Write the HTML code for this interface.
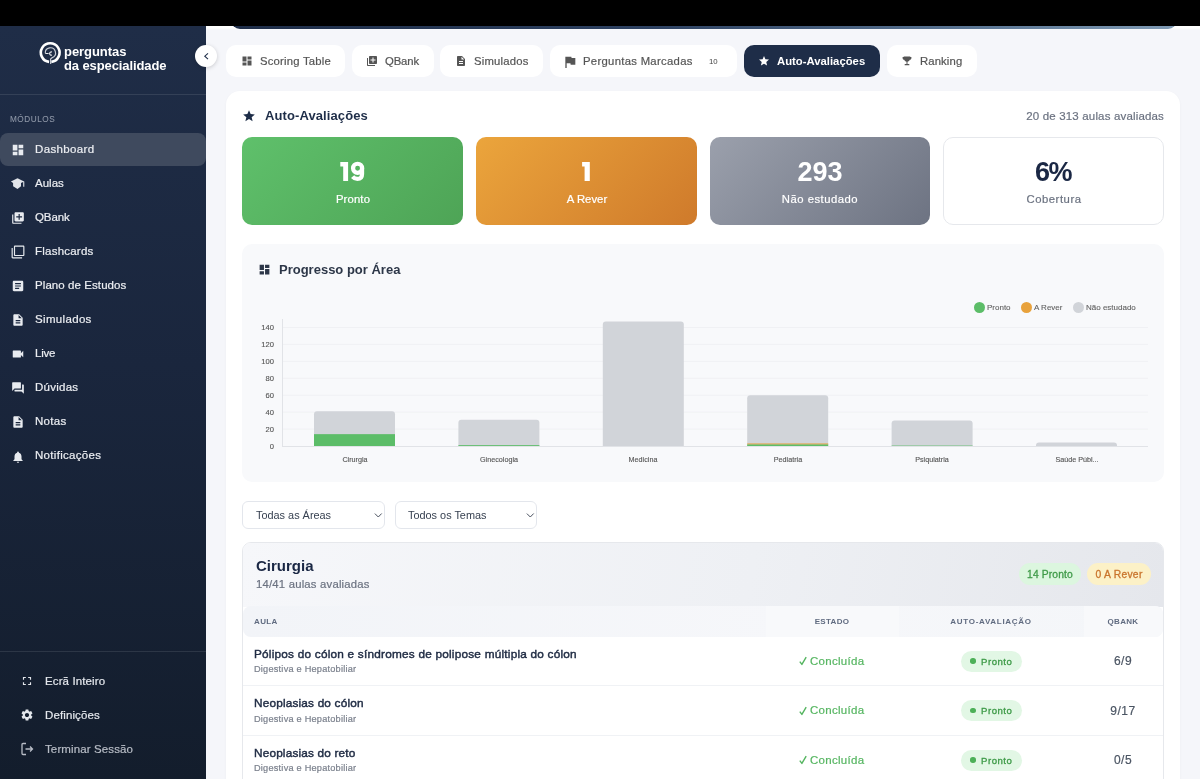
<!DOCTYPE html>
<html><head><meta charset="utf-8">
<style>
*{box-sizing:border-box;margin:0;padding:0}
html,body{width:1200px;height:779px;overflow:hidden;background:#f5f6fa;font-family:"Liberation Sans",sans-serif}
.abs{position:absolute}
.t{position:absolute;white-space:nowrap;line-height:1;will-change:transform}
</style></head><body>
<div class="abs" style="left:206px;top:26px;width:994px;height:4px;background:linear-gradient(180deg,#fff 0%,#fff 45%,#f5f6fa 100%)"></div><div class="abs" style="left:231px;top:0px;width:946px;height:29px;border-radius:0 0 9px 9px;background:linear-gradient(90deg,#1e2d48 0%,#2e4262 45%,#5d7896 80%,#7f9ab4 100%)"></div><div class="abs" style="left:0;top:0;width:1200px;height:26px;background:#000"></div><div class="abs" style="left:0;top:26px;width:206px;height:753px;background:linear-gradient(180deg,#1f2d47 0%,#1a263d 45%,#131d2c 100%)"></div><svg class="abs" style="left:38px;top:40px" width="25" height="25" viewBox="0 0 25 25"><path d="M11.1 21.9 A9.35 9.35 0 1 1 13.3 21.9" fill="none" stroke="#fff" stroke-width="2.6"/><path d="M7.3 13.1 A5.1 5.1 0 1 1 14.3 17.6 L12.6 19 V24" fill="none" stroke="#c9cdd5" stroke-width="1.15"/><path d="M7.3 13.5 L10.6 13.5 M13.9 12.1 A1.6 1.6 0 1 0 13.9 15" fill="none" stroke="#e6e8ec" stroke-width="1.2"/></svg><div class="t" style="left:64.4px;top:44.90px;font-size:13px;color:#fff;font-weight:700;letter-spacing:-0.05px;">perguntas</div><div class="t" style="left:64.4px;top:58.70px;font-size:13px;color:#fff;font-weight:700;letter-spacing:-0.1px;">da especialidade</div><div class="abs" style="left:0;top:94px;width:206px;height:1px;background:rgba(255,255,255,0.10)"></div><div class="t" style="left:10px;top:115.96px;font-size:8.2px;color:#8d96a6;font-weight:400;letter-spacing:0.55px;-webkit-text-stroke:0.1px #8d96a6;">MÓDULOS</div><div class="abs" style="left:0;top:133px;width:206px;height:33px;background:#3f4a5e;border-radius:8px"></div><svg class="abs" style="left:10.5px;top:142.8px" width="14" height="14" viewBox="0 0 24 24"><path fill="#e8ebf0" d="M3 13h8V3H3v10zm0 8h8v-6H3v6zm10 0h8V11h-8v10zm0-18v6h8V3h-8z"/></svg><div class="t" style="left:35.25px;top:143.77px;font-size:11.5px;color:#eceef2;font-weight:400;letter-spacing:0.36px;-webkit-text-stroke:0.2px #eceef2;">Dashboard</div><svg class="abs" style="left:8px;top:174.1px" width="20" height="18" viewBox="8 174 20 18"><path fill="#e2e5ea" d="M17.5 178.2 L24.1 181.5 L21 183.1 V186.3 L17.5 189 L13.1 186.3 V183.1 L10.9 181.5 Z M23.2 181.6 h1.1 v5.2 h-1.1 z"/></svg><div class="t" style="left:35.25px;top:177.85px;font-size:11.5px;color:#eceef2;font-weight:400;letter-spacing:0.026px;-webkit-text-stroke:0.2px #eceef2;">Aulas</div><svg class="abs" style="left:10.5px;top:211.0px" width="14" height="14" viewBox="0 0 24 24"><path fill="#e8ebf0" d="M4 6H2v14c0 1.1.9 2 2 2h14v-2H4V6zm16-4H8c-1.1 0-2 .9-2 2v12c0 1.1.9 2 2 2h12c1.1 0 2-.9 2-2V4c0-1.1-.9-2-2-2zm-1 9h-4v4h-2v-4H9V9h4V5h2v4h4v2z"/></svg><div class="t" style="left:35.25px;top:211.93px;font-size:11.5px;color:#eceef2;font-weight:400;letter-spacing:-0.092px;-webkit-text-stroke:0.2px #eceef2;">QBank</div><svg class="abs" style="left:10.5px;top:245.0px" width="14" height="14" viewBox="0 0 24 24"><path fill="#e8ebf0" d="M3 5H1v16c0 1.1.9 2 2 2h16v-2H3V5zm18-4H7c-1.1 0-2 .9-2 2v14c0 1.1.9 2 2 2h14c1.1 0 2-.9 2-2V3c0-1.1-.9-2-2-2zm0 16H7V3h14v14z"/></svg><div class="t" style="left:35.25px;top:246.01px;font-size:11.5px;color:#eceef2;font-weight:400;letter-spacing:0.226px;-webkit-text-stroke:0.2px #eceef2;">Flashcards</div><svg class="abs" style="left:10.5px;top:279.1px" width="14" height="14" viewBox="0 0 24 24"><path fill="#e8ebf0" d="M19 3H5c-1.1 0-2 .9-2 2v14c0 1.1.9 2 2 2h14c1.1 0 2-.9 2-2V5c0-1.1-.9-2-2-2zm-5 14H7v-2h7v2zm3-4H7v-2h10v2zm0-4H7V7h10v2z"/></svg><div class="t" style="left:35.25px;top:280.09px;font-size:11.5px;color:#eceef2;font-weight:400;letter-spacing:0.078px;-webkit-text-stroke:0.2px #eceef2;">Plano de Estudos</div><svg class="abs" style="left:10.5px;top:313.2px" width="14" height="14" viewBox="0 0 24 24"><path fill="#e8ebf0" d="M14 2H6c-1.1 0-1.99.9-1.99 2L4 20c0 1.1.89 2 1.99 2H18c1.1 0 2-.9 2-2V8l-6-6zm2 16H8v-2h8v2zm0-4H8v-2h8v2zm-3-5V3.5L18.5 9H13z"/></svg><div class="t" style="left:35.25px;top:314.17px;font-size:11.5px;color:#eceef2;font-weight:400;letter-spacing:0.334px;-webkit-text-stroke:0.2px #eceef2;">Simulados</div><svg class="abs" style="left:10.5px;top:347.3px" width="14" height="14" viewBox="0 0 24 24"><path fill="#e8ebf0" d="M17 10.5V7c0-.55-.45-1-1-1H4c-.55 0-1 .45-1 1v10c0 .55.45 1 1 1h12c.55 0 1-.45 1-1v-3.5l4 4v-11l-4 4z"/></svg><div class="t" style="left:35.25px;top:348.25px;font-size:11.5px;color:#eceef2;font-weight:400;letter-spacing:-0.249px;-webkit-text-stroke:0.2px #eceef2;">Live</div><svg class="abs" style="left:10.5px;top:381.4px" width="14" height="14" viewBox="0 0 24 24"><path fill="#e8ebf0" d="M21 6h-2v9H6v2c0 .55.45 1 1 1h11l4 4V7c0-.55-.45-1-1-1zm-4 6V3c0-.55-.45-1-1-1H3c-.55 0-1 .45-1 1v14l4-4h10c.55 0 1-.45 1-1z"/></svg><div class="t" style="left:35.25px;top:382.33px;font-size:11.5px;color:#eceef2;font-weight:400;letter-spacing:0.25px;-webkit-text-stroke:0.2px #eceef2;">Dúvidas</div><svg class="abs" style="left:10.5px;top:415.4px" width="14" height="14" viewBox="0 0 24 24"><path fill="#e8ebf0" d="M14 2H6c-1.1 0-1.99.9-1.99 2L4 20c0 1.1.89 2 1.99 2H18c1.1 0 2-.9 2-2V8l-6-6zm2 16H8v-2h8v2zm0-4H8v-2h8v2zm-3-5V3.5L18.5 9H13z"/></svg><div class="t" style="left:35.25px;top:416.41px;font-size:11.5px;color:#eceef2;font-weight:400;letter-spacing:0.312px;-webkit-text-stroke:0.2px #eceef2;">Notas</div><svg class="abs" style="left:10.5px;top:449.5px" width="14" height="14" viewBox="0 0 24 24"><path fill="#e8ebf0" d="M12 22c1.1 0 2-.9 2-2h-4c0 1.1.89 2 2 2zm6-6v-5c0-3.07-1.64-5.64-4.5-6.32V4c0-.83-.67-1.5-1.5-1.5s-1.5.67-1.5 1.5v.68C7.63 5.36 6 7.92 6 11v5l-2 2v1h16v-1l-2-2z"/></svg><div class="t" style="left:35.25px;top:450.49px;font-size:11.5px;color:#eceef2;font-weight:400;letter-spacing:0.297px;-webkit-text-stroke:0.2px #eceef2;">Notificações</div><div class="abs" style="left:0;top:651px;width:206px;height:1px;background:rgba(255,255,255,0.10)"></div><svg class="abs" style="left:20px;top:674px" width="14" height="14" viewBox="0 0 24 24"><path fill="#e4e7ec" d="M7 14H5v5h5v-2H7v-3zm-2-4h2V7h3V5H5v5zm12 7h-3v2h5v-5h-2v3zM14 5v2h3v3h2V5h-5z"/></svg><div class="t" style="left:44.7px;top:675.57px;font-size:11.5px;color:#e4e7ec;font-weight:400;letter-spacing:0.12px;-webkit-text-stroke:0.2px #e4e7ec;">Ecrã Inteiro</div><svg class="abs" style="left:20px;top:708px" width="14" height="14" viewBox="0 0 24 24"><path fill="#e4e7ec" d="M19.14 12.94c.04-.3.06-.61.06-.94 0-.32-.02-.64-.07-.94l2.03-1.58c.18-.14.23-.41.12-.61l-1.92-3.32c-.12-.22-.37-.29-.59-.22l-2.39.96c-.5-.38-1.030-.7-1.62-.94l-.36-2.54c-.04-.24-.24-.41-.48-.41h-3.84c-.24 0-.43.17-.47.41l-.36 2.54c-.59.24-1.13.57-1.62.94l-2.39-.96c-.22-.08-.47 0-.59.22L2.74 8.870c-.12.21-.08.47.12.61l2.03 1.58c-.05.3-.09.63-.09.94s.02.64.07.94l-2.03 1.58c-.18.14-.23.41-.12.61l1.92 3.32c.12.22.37.29.59.22l2.39-.96c.5.38 1.03.7 1.62.94l.36 2.54c.05.24.24.41.48.41h3.84c.24 0 .44-.17.47-.41l.36-2.54c.59-.24 1.13-.56 1.62-.94l2.39.96c.22.08.47 0 .59-.22l1.92-3.32c.12-.22.07-.47-.12-.61l-2.010-1.58zM12 15.6c-1.98 0-3.6-1.62-3.6-3.6s1.62-3.6 3.6-3.6 3.6 1.62 3.6 3.6-1.62 3.6-3.6 3.6z"/></svg><div class="t" style="left:44.7px;top:709.57px;font-size:11.5px;color:#e4e7ec;font-weight:400;letter-spacing:0.12px;-webkit-text-stroke:0.2px #e4e7ec;">Definições</div><svg class="abs" style="left:20px;top:742px" width="14" height="14" viewBox="0 0 14 14"><path d="M6 1.5H3a1 1 0 0 0-1 1v9a1 1 0 0 0 1 1h3" fill="none" stroke="#b8bdc6" stroke-width="1.3"/><path d="M5.5 7h7M10 4.5 12.5 7 10 9.5" fill="none" stroke="#b8bdc6" stroke-width="1.3"/></svg><div class="t" style="left:44.7px;top:743.57px;font-size:11.5px;color:#b8bdc6;font-weight:400;letter-spacing:0.12px;-webkit-text-stroke:0.2px #b8bdc6;">Terminar Sessão</div><div class="abs" style="left:195px;top:45px;width:22px;height:22px;border-radius:50%;background:#fff;box-shadow:0 1px 4px rgba(0,0,0,0.18)"></div><svg class="abs" style="left:201px;top:51px" width="10" height="10" viewBox="0 0 10 10"><path d="M7 2.3 3.8 5.2 7 8.1" fill="none" stroke="#1e2d48" stroke-width="1.1"/></svg><div class="abs" style="left:226px;top:45px;width:119px;height:32px;background:#fff;border-radius:10px"></div><svg class="abs" style="left:240.60000000000002px;top:55px" width="12" height="12" viewBox="0 0 24 24"><path fill="#555" d="M3 13h8V3H3v10zm0 8h8v-6H3v6zm10 0h8V11h-8v10zm0-18v6h8V3h-8z"/></svg><div class="t" style="left:259.6px;top:55.73px;font-size:11.3px;color:#555;font-weight:400;letter-spacing:0.21px;-webkit-text-stroke:0.2px #555;">Scoring Table</div><div class="abs" style="left:352px;top:45px;width:82px;height:32px;background:#fff;border-radius:10px"></div><svg class="abs" style="left:366px;top:55px" width="12" height="12" viewBox="0 0 24 24"><path fill="#555" d="M4 6H2v14c0 1.1.9 2 2 2h14v-2H4V6zm16-4H8c-1.1 0-2 .9-2 2v12c0 1.1.9 2 2 2h12c1.1 0 2-.9 2-2V4c0-1.1-.9-2-2-2zm-1 9h-4v4h-2v-4H9V9h4V5h2v4h4v2z"/></svg><div class="t" style="left:385px;top:55.73px;font-size:11.3px;color:#555;font-weight:400;letter-spacing:-0.109px;-webkit-text-stroke:0.2px #555;">QBank</div><div class="abs" style="left:440px;top:45px;width:103px;height:32px;background:#fff;border-radius:10px"></div><svg class="abs" style="left:455px;top:55px" width="12" height="12" viewBox="0 0 24 24"><path fill="#555" d="M14 2H6c-1.1 0-1.99.9-1.99 2L4 20c0 1.1.89 2 1.99 2H18c1.1 0 2-.9 2-2V8l-6-6zm2 16H8v-2h8v2zm0-4H8v-2h8v2zm-3-5V3.5L18.5 9H13z"/></svg><div class="t" style="left:474px;top:55.73px;font-size:11.3px;color:#555;font-weight:400;letter-spacing:0.216px;-webkit-text-stroke:0.2px #555;">Simulados</div><div class="abs" style="left:550px;top:45px;width:187px;height:32px;background:#fff;border-radius:10px"></div><svg class="abs" style="left:561.7px;top:53.8px" width="16" height="16" viewBox="0 0 24 24"><path fill="#555" d="M14.4 6L14 4H5v17h2v-7h5.6l.4 2h7V6z"/></svg><div class="t" style="left:583px;top:55.73px;font-size:11.3px;color:#555;font-weight:400;letter-spacing:0.302px;-webkit-text-stroke:0.2px #555;">Perguntas Marcadas</div><div class="abs" style="left:744px;top:45px;width:136px;height:32px;background:#1e2d48;border-radius:10px"></div><svg class="abs" style="left:758.2px;top:55px" width="12" height="12" viewBox="0 0 24 24"><path fill="#fff" d="M12 17.27L18.18 21l-1.64-7.03L22 9.24l-7.19-.61L12 2 9.19 8.63 2 9.24l5.46 4.73L5.82 21z"/></svg><div class="t" style="left:777.2px;top:55.73px;font-size:11.3px;color:#fff;font-weight:700;letter-spacing:0.005px;">Auto-Avaliações</div><div class="abs" style="left:887px;top:45px;width:90px;height:32px;background:#fff;border-radius:10px"></div><svg class="abs" style="left:900.6px;top:55px" width="12" height="12" viewBox="0 0 24 24"><path fill="#555" d="M5.5 3h13v1.2h2.3v1.6c0 2-1.4 3.5-3.2 3.8-.8 2.1-2.6 3.6-4.6 3.9V18h3.6v2.4H7.4V18H11v-4.5c-2-.3-3.8-1.8-4.6-3.9C4.6 9.3 3.2 7.8 3.2 5.8V4.2h2.3z"/></svg><div class="t" style="left:919.6px;top:55.73px;font-size:11.3px;color:#555;font-weight:400;letter-spacing:0.12px;-webkit-text-stroke:0.2px #555;">Ranking</div><div class="t" style="left:708.6px;top:58.00px;font-size:7.8px;color:#444;font-weight:400;letter-spacing:0px;">10</div><div class="abs" style="left:226px;top:91px;width:954px;height:720px;background:#fff;border-radius:14px;box-shadow:0 1px 3px rgba(20,30,60,0.04)"></div><svg class="abs" style="left:242px;top:109px" width="14" height="14" viewBox="0 0 24 24"><path fill="#1e2d48" d="M12 17.27L18.18 21l-1.64-7.03L22 9.24l-7.19-.61L12 2 9.19 8.63 2 9.24l5.46 4.73L5.82 21z"/></svg><div class="t" style="left:265px;top:109.30px;font-size:13px;color:#1e2d48;font-weight:700;letter-spacing:0.1px;">Auto-Avaliações</div><div class="t" style="left:564.16px;width:600px;text-align:right;top:110.57px;font-size:11.5px;color:#6b7280;font-weight:400;letter-spacing:0.163px;-webkit-text-stroke:0.2px #6b7280;">20 de 313 aulas avaliadas</div><div class="abs" style="left:242px;top:137px;width:221px;height:88px;background:linear-gradient(135deg,#5fc06b 0%,#4ea456 100%);border-radius:10px;"></div><svg class="abs" style="left:0;top:0" width="1200" height="779"><path fill="#fff" d="M340.3 162 H348.1 V180.9 H343.2 V166.5 H340.3 Z"/><circle cx="357.6" cy="168.3" r="4.55" fill="none" stroke="#fff" stroke-width="4.2"/><path d="M362.05 168.3 V174 Q362.05 178.95 357.4 178.95 Q354.6 178.95 352.6 176.6" fill="none" stroke="#fff" stroke-width="4.2"/></svg><div class="t" style="left:52.58px;width:600px;text-align:center;top:193.73px;font-size:11.3px;color:#fff;font-weight:400;letter-spacing:0.151px;-webkit-text-stroke:0.2px #fff;">Pronto</div><div class="abs" style="left:476px;top:137px;width:221px;height:88px;background:linear-gradient(135deg,#eba53c 0%,#cf7a2b 100%);border-radius:10px;"></div><svg class="abs" style="left:0;top:0" width="1200" height="779"><path fill="#fff" d="M582.1 162 H589.8 V180.9 H584.6 V166.5 H582.1 Z"/></svg><div class="t" style="left:286.51px;width:600px;text-align:center;top:193.73px;font-size:11.3px;color:#fff;font-weight:400;letter-spacing:0.029px;-webkit-text-stroke:0.2px #fff;">A Rever</div><div class="abs" style="left:710px;top:137px;width:220px;height:88px;background:linear-gradient(135deg,#9ba0ac 0%,#6d7382 100%);border-radius:10px;"></div><div class="t" style="left:520.00px;width:600px;text-align:center;top:159.24px;font-size:27px;color:#fff;font-weight:700;letter-spacing:0px;">293</div><div class="t" style="left:520.25px;width:600px;text-align:center;top:193.73px;font-size:11.3px;color:#fff;font-weight:400;letter-spacing:0.494px;-webkit-text-stroke:0.2px #fff;">Não estudado</div><div class="abs" style="left:943px;top:137px;width:221px;height:88px;background:#fff;border-radius:10px;border:1px solid #e6e8ec;"></div><div class="t" style="left:752.75px;width:600px;text-align:center;top:159.24px;font-size:27px;color:#1a2744;font-weight:700;letter-spacing:-1.5px;">6%</div><div class="t" style="left:753.76px;width:600px;text-align:center;top:193.73px;font-size:11.3px;color:#6b7280;font-weight:400;letter-spacing:0.528px;-webkit-text-stroke:0.2px #6b7280;">Cobertura</div><div class="abs" style="left:242px;top:244px;width:922px;height:238px;background:#f8f9fb;border-radius:10px"></div><svg class="abs" style="left:258px;top:263px" width="13" height="13" viewBox="0 0 24 24"><path fill="#2d3748" d="M3 13h8V3H3v10zm0 8h8v-6H3v6zm10 0h8V11h-8v10zm0-18v6h8V3h-8z"/></svg><div class="t" style="left:279px;top:263.10px;font-size:13px;color:#2d3748;font-weight:700;letter-spacing:0px;">Progresso por Área</div><div class="abs" style="left:973.5px;top:301.5px;width:11px;height:11px;border-radius:50%;background:#5cbd68"></div><div class="t" style="left:987.2px;top:304.13px;font-size:8px;color:#606060;font-weight:400;letter-spacing:0px;-webkit-text-stroke:0.1px #606060;">Pronto</div><div class="abs" style="left:1021.2px;top:301.5px;width:11px;height:11px;border-radius:50%;background:#e8a23c"></div><div class="t" style="left:1034.4px;top:304.13px;font-size:8px;color:#606060;font-weight:400;letter-spacing:0px;-webkit-text-stroke:0.1px #606060;">A Rever</div><div class="abs" style="left:1072.8px;top:301.5px;width:11px;height:11px;border-radius:50%;background:#d1d4d9"></div><div class="t" style="left:1086.3px;top:304.13px;font-size:8px;color:#606060;font-weight:400;letter-spacing:0px;-webkit-text-stroke:0.1px #606060;">Não estudado</div><svg class="abs" style="left:0;top:0" width="1200" height="779"><line x1="282" y1="429.1" x2="1148" y2="429.1" stroke="#f0f1f4" stroke-width="1"/><line x1="282" y1="412.1" x2="1148" y2="412.1" stroke="#f0f1f4" stroke-width="1"/><line x1="282" y1="395.2" x2="1148" y2="395.2" stroke="#f0f1f4" stroke-width="1"/><line x1="282" y1="378.3" x2="1148" y2="378.3" stroke="#f0f1f4" stroke-width="1"/><line x1="282" y1="361.4" x2="1148" y2="361.4" stroke="#f0f1f4" stroke-width="1"/><line x1="282" y1="344.4" x2="1148" y2="344.4" stroke="#f0f1f4" stroke-width="1"/><line x1="282" y1="327.5" x2="1148" y2="327.5" stroke="#f0f1f4" stroke-width="1"/><line x1="282.5" y1="319" x2="282.5" y2="446" stroke="#e1e3e7" stroke-width="1"/><line x1="282" y1="446.5" x2="1148" y2="446.5" stroke="#e1e3e7" stroke-width="1"/><path d="M314.0 446 V414.3 Q314.0 411.3 317.0 411.3 H392.0 Q395.0 411.3 395.0 414.3 V446 Z" fill="#d1d4d9"/><rect x="314.0" y="434.15" width="81" height="11.85" fill="#5cbd68"/><path d="M458.4 446 V422.8 Q458.4 419.8 461.4 419.8 H536.4 Q539.4 419.8 539.4 422.8 V446 Z" fill="#d1d4d9"/><rect x="458.4" y="445.15" width="81" height="0.85" fill="#5cbd68"/><path d="M602.8 446 V324.6 Q602.8 321.6 605.8 321.6 H680.8 Q683.8 321.6 683.8 324.6 V446 Z" fill="#d1d4d9"/><path d="M747.2 446 V398.2 Q747.2 395.2 750.2 395.2 H825.2 Q828.2 395.2 828.2 398.2 V446 Z" fill="#d1d4d9"/><rect x="747.2" y="444.31" width="81" height="1.69" fill="#5cbd68"/><rect x="747.2" y="443.46" width="81" height="0.85" fill="#e8a23c"/><path d="M891.6 446 V423.6 Q891.6 420.6 894.6 420.6 H969.6 Q972.6 420.6 972.6 423.6 V446 Z" fill="#d1d4d9"/><rect x="891.6" y="445.58" width="81" height="0.42" fill="#5cbd68"/><path d="M1036.0 446 V445.6 Q1036.0 442.6 1039.0 442.6 H1114.0 Q1117.0 442.6 1117.0 445.6 V446 Z" fill="#d1d4d9"/></svg><div class="t" style="left:-326.40px;width:600px;text-align:right;top:442.57px;font-size:7.6px;color:#555;font-weight:400;letter-spacing:0px;-webkit-text-stroke:0.12px #555;">0</div><div class="t" style="left:-326.40px;width:600px;text-align:right;top:425.64px;font-size:7.6px;color:#555;font-weight:400;letter-spacing:0px;-webkit-text-stroke:0.12px #555;">20</div><div class="t" style="left:-326.40px;width:600px;text-align:right;top:408.71px;font-size:7.6px;color:#555;font-weight:400;letter-spacing:0px;-webkit-text-stroke:0.12px #555;">40</div><div class="t" style="left:-326.40px;width:600px;text-align:right;top:391.78px;font-size:7.6px;color:#555;font-weight:400;letter-spacing:0px;-webkit-text-stroke:0.12px #555;">60</div><div class="t" style="left:-326.40px;width:600px;text-align:right;top:374.85px;font-size:7.6px;color:#555;font-weight:400;letter-spacing:0px;-webkit-text-stroke:0.12px #555;">80</div><div class="t" style="left:-326.40px;width:600px;text-align:right;top:357.92px;font-size:7.6px;color:#555;font-weight:400;letter-spacing:0px;-webkit-text-stroke:0.12px #555;">100</div><div class="t" style="left:-326.40px;width:600px;text-align:right;top:341.00px;font-size:7.6px;color:#555;font-weight:400;letter-spacing:0px;-webkit-text-stroke:0.12px #555;">120</div><div class="t" style="left:-326.40px;width:600px;text-align:right;top:324.07px;font-size:7.6px;color:#555;font-weight:400;letter-spacing:0px;-webkit-text-stroke:0.12px #555;">140</div><div class="t" style="left:54.50px;width:600px;text-align:center;top:456.21px;font-size:7.2px;color:#555;font-weight:400;letter-spacing:0px;-webkit-text-stroke:0.12px #555;">Cirurgia</div><div class="t" style="left:198.90px;width:600px;text-align:center;top:456.21px;font-size:7.2px;color:#555;font-weight:400;letter-spacing:0px;-webkit-text-stroke:0.12px #555;">Ginecologia</div><div class="t" style="left:343.30px;width:600px;text-align:center;top:456.21px;font-size:7.2px;color:#555;font-weight:400;letter-spacing:0px;-webkit-text-stroke:0.12px #555;">Medicina</div><div class="t" style="left:487.70px;width:600px;text-align:center;top:456.21px;font-size:7.2px;color:#555;font-weight:400;letter-spacing:0px;-webkit-text-stroke:0.12px #555;">Pediatria</div><div class="t" style="left:632.10px;width:600px;text-align:center;top:456.21px;font-size:7.2px;color:#555;font-weight:400;letter-spacing:0px;-webkit-text-stroke:0.12px #555;">Psiquiatria</div><div class="t" style="left:776.50px;width:600px;text-align:center;top:456.21px;font-size:7.2px;color:#555;font-weight:400;letter-spacing:0px;-webkit-text-stroke:0.12px #555;">Saúde Públ...</div><div class="abs" style="left:242px;top:501px;width:143px;height:28px;background:#fff;border:1px solid #e3e6ec;border-radius:6px"></div><div class="t" style="left:256px;top:509.97px;font-size:10.9px;color:#374151;font-weight:400;letter-spacing:0px;">Todas as Áreas</div><svg class="abs" style="left:374px;top:510.5px" width="9" height="9" viewBox="0 0 9 9"><path d="M0.9 2.6 4.3 6 7.7 2.5" fill="none" stroke="#3f4756" stroke-width="0.95"/></svg><div class="abs" style="left:394.5px;top:501px;width:142.5px;height:28px;background:#fff;border:1px solid #e3e6ec;border-radius:6px"></div><div class="t" style="left:408.3px;top:509.97px;font-size:10.9px;color:#374151;font-weight:400;letter-spacing:0px;">Todos os Temas</div><svg class="abs" style="left:526px;top:510.5px" width="9" height="9" viewBox="0 0 9 9"><path d="M0.9 2.6 4.3 6 7.7 2.5" fill="none" stroke="#3f4756" stroke-width="0.95"/></svg><div class="abs" style="left:242px;top:542px;width:922px;height:260px;background:#fff;border:1px solid #e6e8ec;border-radius:9px;overflow:hidden"><div class="abs" style="left:0;top:0;width:922px;height:64px;background:linear-gradient(100deg,#f6f7fa 0%,#eef0f4 55%,#e5e7ec 100%)"></div><div class="abs" style="left:0;top:63px;width:920px;height:31px;background:linear-gradient(90deg,#f2f4f8 0%,#f6f7fa 60%,#f4f6f9 100%);border-radius:8px"></div><div class="abs" style="left:523px;top:63px;width:133px;height:31px;background:#f8f9fb"></div><div class="abs" style="left:841px;top:63px;width:79px;height:31px;background:#f8f9fb;border-radius:0 8px 8px 0"></div></div><div class="t" style="left:256px;top:558.20px;font-size:15px;color:#1a2744;font-weight:700;letter-spacing:0px;">Cirurgia</div><div class="t" style="left:256px;top:579.03px;font-size:11.3px;color:#6b7280;font-weight:400;letter-spacing:0.209px;-webkit-text-stroke:0.2px #6b7280;">14/41 aulas avaliadas</div><div class="abs" style="left:1019px;top:563px;width:62px;height:22px;border-radius:11px;background:#dcf6df"></div><div class="t" style="left:750.07px;width:600px;text-align:center;top:569.58px;font-size:10.3px;color:#3f9a48;font-weight:400;letter-spacing:0.137px;-webkit-text-stroke:0.3px #3f9a48;">14 Pronto</div><div class="abs" style="left:1087px;top:563px;width:64px;height:22px;border-radius:11px;background:#fcf1c7"></div><div class="t" style="left:819.14px;width:600px;text-align:center;top:569.58px;font-size:10.3px;color:#c9742c;font-weight:400;letter-spacing:0.282px;-webkit-text-stroke:0.3px #c9742c;">0 A Rever</div><div class="t" style="left:254.4px;top:617.53px;font-size:8px;color:#606b80;font-weight:700;letter-spacing:0.35px;">AULA</div><div class="t" style="left:532.15px;width:600px;text-align:center;top:617.53px;font-size:8px;color:#606b80;font-weight:700;letter-spacing:0.3px;">ESTADO</div><div class="t" style="left:691.35px;width:600px;text-align:center;top:617.53px;font-size:8px;color:#606b80;font-weight:700;letter-spacing:0.7px;">AUTO-AVALIAÇÃO</div><div class="t" style="left:823.15px;width:600px;text-align:center;top:617.53px;font-size:8px;color:#606b80;font-weight:700;letter-spacing:0.3px;">QBANK</div><div class="t" style="left:254px;top:648.71px;font-size:11.8px;color:#202c44;font-weight:400;letter-spacing:0.219px;-webkit-text-stroke:0.42px #202c44;">Pólipos do cólon e síndromes de polipose múltipla do cólon</div><div class="t" style="left:254px;top:665.11px;font-size:9.2px;color:#7b818d;font-weight:400;letter-spacing:0.222px;-webkit-text-stroke:0.2px #7b818d;">Digestiva e Hepatobiliar</div><div class="abs" style="left:243px;top:685.0px;width:920px;height:1px;background:#f0f2f5"></div><svg class="abs" style="left:798px;top:655.0px" width="10" height="11" viewBox="0 0 10 11"><path d="M1.8 6.6 3.9 9.4 8.2 2.2" fill="none" stroke="#55b560" stroke-width="1.4" stroke-linejoin="round"/></svg><div class="t" style="left:810.3px;top:655.57px;font-size:11.5px;color:#55b560;font-weight:400;letter-spacing:0.291px;-webkit-text-stroke:0.2px #55b560;">Concluída</div><div class="abs" style="left:960.5px;top:650.5px;width:61.5px;height:21px;border-radius:11px;background:#e2f7e5"></div><div class="abs" style="left:970.3px;top:658.3px;width:5.5px;height:5.5px;border-radius:50%;background:#4db058"></div><div class="t" style="left:981.4px;top:656.67px;font-size:9.6px;color:#3d9a47;font-weight:400;letter-spacing:0.519px;-webkit-text-stroke:0.3px #3d9a47;">Pronto</div><div class="t" style="left:823.25px;width:600px;text-align:center;top:655.14px;font-size:12px;color:#4b5563;font-weight:400;letter-spacing:0.5px;-webkit-text-stroke:0.2px #4b5563;">6/9</div><div class="t" style="left:254px;top:698.21px;font-size:11.8px;color:#202c44;font-weight:400;letter-spacing:0.181px;-webkit-text-stroke:0.42px #202c44;">Neoplasias do cólon</div><div class="t" style="left:254px;top:714.61px;font-size:9.2px;color:#7b818d;font-weight:400;letter-spacing:0.222px;-webkit-text-stroke:0.2px #7b818d;">Digestiva e Hepatobiliar</div><div class="abs" style="left:243px;top:734.5px;width:920px;height:1px;background:#f0f2f5"></div><svg class="abs" style="left:798px;top:704.5px" width="10" height="11" viewBox="0 0 10 11"><path d="M1.8 6.6 3.9 9.4 8.2 2.2" fill="none" stroke="#55b560" stroke-width="1.4" stroke-linejoin="round"/></svg><div class="t" style="left:810.3px;top:705.07px;font-size:11.5px;color:#55b560;font-weight:400;letter-spacing:0.291px;-webkit-text-stroke:0.2px #55b560;">Concluída</div><div class="abs" style="left:960.5px;top:700.0px;width:61.5px;height:21px;border-radius:11px;background:#e2f7e5"></div><div class="abs" style="left:970.3px;top:707.8px;width:5.5px;height:5.5px;border-radius:50%;background:#4db058"></div><div class="t" style="left:981.4px;top:706.17px;font-size:9.6px;color:#3d9a47;font-weight:400;letter-spacing:0.519px;-webkit-text-stroke:0.3px #3d9a47;">Pronto</div><div class="t" style="left:823.25px;width:600px;text-align:center;top:704.64px;font-size:12px;color:#4b5563;font-weight:400;letter-spacing:0.5px;-webkit-text-stroke:0.2px #4b5563;">9/17</div><div class="t" style="left:254px;top:747.71px;font-size:11.8px;color:#202c44;font-weight:400;letter-spacing:0.167px;-webkit-text-stroke:0.42px #202c44;">Neoplasias do reto</div><div class="t" style="left:254px;top:764.11px;font-size:9.2px;color:#7b818d;font-weight:400;letter-spacing:0.222px;-webkit-text-stroke:0.2px #7b818d;">Digestiva e Hepatobiliar</div><svg class="abs" style="left:798px;top:754.0px" width="10" height="11" viewBox="0 0 10 11"><path d="M1.8 6.6 3.9 9.4 8.2 2.2" fill="none" stroke="#55b560" stroke-width="1.4" stroke-linejoin="round"/></svg><div class="t" style="left:810.3px;top:754.57px;font-size:11.5px;color:#55b560;font-weight:400;letter-spacing:0.291px;-webkit-text-stroke:0.2px #55b560;">Concluída</div><div class="abs" style="left:960.5px;top:749.5px;width:61.5px;height:21px;border-radius:11px;background:#e2f7e5"></div><div class="abs" style="left:970.3px;top:757.3px;width:5.5px;height:5.5px;border-radius:50%;background:#4db058"></div><div class="t" style="left:981.4px;top:755.67px;font-size:9.6px;color:#3d9a47;font-weight:400;letter-spacing:0.519px;-webkit-text-stroke:0.3px #3d9a47;">Pronto</div><div class="t" style="left:823.25px;width:600px;text-align:center;top:754.14px;font-size:12px;color:#4b5563;font-weight:400;letter-spacing:0.5px;-webkit-text-stroke:0.2px #4b5563;">0/5</div>
</body></html>
